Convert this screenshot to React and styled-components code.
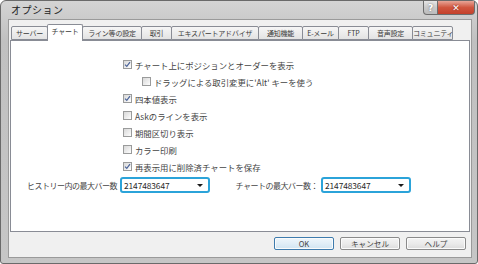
import React from 'react';
import styled, { createGlobalStyle } from 'styled-components';

const GlobalStyle = createGlobalStyle`
  body {
    margin: 0;
    background: #ffffff;
    font-family: "Noto Sans CJK JP", "Noto Sans", sans-serif;
  }
`;

const Window = styled.div`
  width: 478px;
  height: 264px;
  box-sizing: border-box;
  border: 1px solid #6a6a6a;
  border-radius: 6px 6px 3px 3px;
  background: linear-gradient(#d4d4d4, #c0c0c0 40px, #c6c6c6);
  padding: 0 5px 5px 7px;
  display: flex;
  flex-direction: column;
`;

const TitleBar = styled.div`
  height: 18px;
  display: flex;
  justify-content: space-between;
  align-items: flex-start;
  margin-right: -3px;
`;

const Title = styled.div`
  font-size: 10px;
  line-height: 17px;
  padding-left: 3px;
  color: #222222;
  letter-spacing: 0.5px;
`;

const Caption = styled.div`
  display: flex;
`;

const CaptionButton = styled.div`
  width: ${p => p.$w}px;
  height: 14px;
  box-sizing: border-box;
  border: 1px solid #6d6d6d;
  border-top: none;
  display: flex;
  align-items: center;
  justify-content: center;
  font-family: "DejaVu Sans", sans-serif;
  font-weight: bold;
  font-size: 9px;
  color: #ffffff;
  background: ${p => (p.$close
    ? 'linear-gradient(#e8a597, #d0563f 50%, #c4402a)'
    : 'linear-gradient(#e6e6e6, #c9c9c9 50%, #bcbcbc)')};
  border-radius: ${p => (p.$close ? '0 0 4px 0' : '0 0 0 4px')};
  border-left: ${p => (p.$close ? 'none' : '1px solid #6d6d6d')};
  text-shadow: ${p => (p.$close ? '0 0 2px #7a1a0a' : '0 0 2px #666')};
`;

const Client = styled.div`
  flex: 1;
  background: #f0f0f0;
  border: 1px solid #9a9a9a;
  padding: 4px 1px 0 1px;
  display: flex;
  flex-direction: column;
`;

const TabStrip = styled.div`
  height: 16px;
  display: flex;
  align-items: flex-end;
  padding-left: 2px;
  position: relative;
  z-index: 1;
`;

const Tab = styled.div`
  width: ${p => p.$w}px;
  height: ${p => (p.$active ? 17 : 14)}px;
  margin-bottom: ${p => (p.$active ? -1 : 0)}px;
  margin-left: -1px;
  box-sizing: border-box;
  border: 1px solid #898c95;
  border-bottom: ${p => (p.$active ? 'none' : '1px solid #898c95')};
  border-radius: 2px 2px 0 0;
  background: ${p => (p.$active ? '#ffffff' : 'linear-gradient(#f6f6f6, #e3e3e3)')};
  font-size: 7px;
  letter-spacing: -0.2px;
  line-height: 12px;
  color: #3a3a3a;
  text-align: center;
  white-space: nowrap;
`;

const Panel = styled.div`
  height: 192px;
  box-sizing: border-box;
  background: #ffffff;
  border: 1px solid #898c95;
  padding-top: 15px;
  display: flex;
  flex-direction: column;
`;

const CheckRow = styled.div`
  height: 17px;
  display: flex;
  align-items: center;
  padding-left: ${p => p.$indent}px;
  font-size: 8.4px;
  color: #444444;
  white-space: nowrap;
`;

const Box = styled.span`
  width: 9px;
  height: 9px;
  box-sizing: border-box;
  border: 1px solid #9a9b9b;
  background: linear-gradient(135deg, #d8d8d8, #f2f2f2 70%, #ffffff);
  margin-right: 3px;
  display: flex;
  align-items: center;
  justify-content: center;
  flex: none;
`;

const ComboRow = styled.div`
  margin-top: 2px;
  height: 16px;
  display: flex;
  align-items: center;
  font-size: 8px;
  color: #444444;
`;

const FieldLabel = styled.div`
  width: ${p => p.$w}px;
  margin-left: ${p => p.$ml}px;
  margin-right: 3px;
  text-align: right;
  white-space: nowrap;
  letter-spacing: -0.5px;
`;

const Combo = styled.div`
  width: 90px;
  height: 16px;
  box-sizing: border-box;
  border: 2px solid #2ba3d9;
  border-radius: 3px;
  background: #ffffff;
  display: flex;
  align-items: center;
  justify-content: space-between;
  padding: 0 5px 0 2px;
  font-size: 8.4px;
  letter-spacing: -0.1px;
  color: #2a2a2a;
`;

const Arrow = styled.span`
  width: 0;
  height: 0;
  border-left: 3px solid transparent;
  border-right: 3px solid transparent;
  border-top: 3px solid #1a1a1a;
`;

const ButtonRow = styled.div`
  display: flex;
  justify-content: flex-end;
  gap: 6px;
  padding: 5px 4px 0 0;
`;

const Button = styled.div`
  width: 60px;
  height: 13px;
  box-sizing: border-box;
  border: 1px solid ${p => (p.$default ? '#3d7bad' : '#8a8a8a')};
  border-radius: 2px;
  background: ${p => (p.$default
    ? 'linear-gradient(#eef6fb, #e1eef7 50%, #d0e4f1)'
    : 'linear-gradient(#f4f4f4, #ebebeb 50%, #dcdcdc)')};
  box-shadow: inset 0 0 0 1px #fbfbfb;
  font-size: 7.6px;
  line-height: 11px;
  color: #444444;
  text-align: center;
`;

const Check = () => (
  <svg width="7" height="7" viewBox="0 0 7 7">
    <path d="M1 3.6 L2.8 5.4 L6 1.2" fill="none" stroke="#4a6399" strokeWidth="1.2" />
  </svg>
);

const CheckBox = ({ checked, indent, children }) => (
  <CheckRow $indent={indent}>
    <Box>{checked && <Check />}</Box>
    {children}
  </CheckRow>
);

const tabs = [
  ['サーバー', 37],
  ['チャート', 36, true],
  ['ライン等の設定', 60],
  ['取引', 31],
  ['エキスパートアドバイザ', 88],
  ['通知機能', 45],
  ['E-メール', 37],
  ['FTP', 31],
  ['音声設定', 45],
  ['コミュニティ', 41],
];

const options = [
  ['チャート上にポジションとオーダーを表示', true, 112],
  ['ドラッグによる取引変更に\'Alt\' キーを使う', false, 131],
  ['四本値表示', true, 112],
  ['Askのラインを表示', false, 112],
  ['期間区切り表示', false, 112],
  ['カラー印刷', false, 112],
  ['再表示用に削除済チャートを保存', true, 112],
];

export default function App() {
  return (
    <>
      <GlobalStyle />
      <Window>
        <TitleBar>
          <Title>オプション</Title>
          <Caption>
            <CaptionButton $w={15}>?</CaptionButton>
            <CaptionButton $w={37} $close>✕</CaptionButton>
          </Caption>
        </TitleBar>
        <Client>
          <TabStrip>
            {tabs.map(([label, w, active]) => (
              <Tab key={label} $w={w} $active={active}>{label}</Tab>
            ))}
          </TabStrip>
          <Panel>
            {options.map(([label, checked, indent]) => (
              <CheckBox key={label} checked={checked} indent={indent}>{label}</CheckBox>
            ))}
            <ComboRow>
              <FieldLabel $w={92} $ml={14}>ヒストリー内の最大バー数</FieldLabel>
              <Combo>2147483647<Arrow /></Combo>
              <FieldLabel $w={88} $ml={20}>チャートの最大バー数：</FieldLabel>
              <Combo>2147483647<Arrow /></Combo>
            </ComboRow>
          </Panel>
          <ButtonRow>
            <Button $default>OK</Button>
            <Button>キャンセル</Button>
            <Button>ヘルプ</Button>
          </ButtonRow>
        </Client>
      </Window>
    </>
  );
}
